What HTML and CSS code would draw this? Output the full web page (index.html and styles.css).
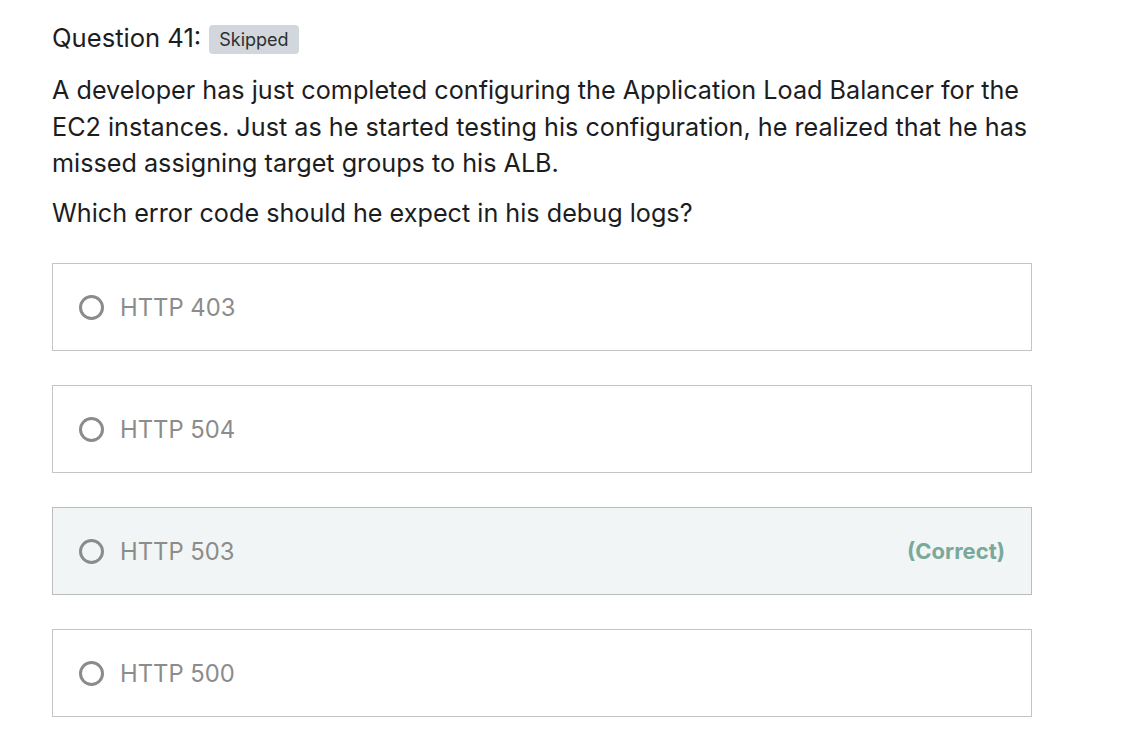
FILE: index.html
```html
<!DOCTYPE html>
<html>
<head>
<meta charset="utf-8">
<link rel="stylesheet" href="styles.css">
</head>
<body>
<div class="page">
  <div class="header">
    <span class="qtitle">Question 41:</span>
    <span class="badge">Skipped</span>
  </div>
  <p class="prompt">A developer has just completed configuring the Application Load Balancer for the EC2 instances. Just as he started testing his configuration, he realized that he has missed assigning target groups to his ALB.</p>
  <p class="prompt ask">Which error code should he expect in his debug logs?</p>
  <div class="answers">
    <div class="answer"><span class="radio"></span><span class="label">HTTP 403</span></div>
    <div class="answer"><span class="radio"></span><span class="label">HTTP 504</span></div>
    <div class="answer correct"><span class="radio"></span><span class="label">HTTP 503</span><span class="tag">(Correct)</span></div>
    <div class="answer"><span class="radio"></span><span class="label">HTTP 500</span></div>
  </div>
</div>
</body>
</html>
```
FILE: styles.css
```css
html, body {
  margin: 0;
  padding: 0;
  background: #ffffff;
}
body {
  font-family: Inter, "Noto Sans", sans-serif;
  color: #1c1d1f;
}
.page {
  padding: 20px 0 0 52px;
  width: 980px;
}
.header {
  display: flex;
  align-items: center;
  gap: 8px;
  height: 34px;
}
.qtitle {
  font-size: 25.6px;
}
.badge {
  background: #d1d7dc;
  color: #2d2f31;
  font-size: 18px;
  border-radius: 4px;
  padding: 0 10px;
  height: 29px;
  line-height: 29px;
  margin-top: 4px;
}
.prompt {
  font-size: 25.2px;
  line-height: 36.5px;
  margin: 18px 0 0;
}
.ask {
  margin-top: 13px;
}
.answers {
  display: flex;
  flex-direction: column;
  gap: 34px;
  margin-top: 32px;
}
.answer {
  height: 88px;
  box-sizing: border-box;
  border: 1px solid #c2c4c6;
  display: flex;
  align-items: center;
  padding: 0 26px 0 26px;
}
.answer.correct {
  background: #f1f5f5;
  border-color: #b9bdbf;
}
.radio {
  width: 25px;
  height: 25px;
  box-sizing: border-box;
  border: 3px solid #8b8b8b;
  border-radius: 50%;
  flex: none;
}
.label {
  margin-left: 16px;
  font-size: 23.8px;
  color: #8c8c8c;
}
.tag {
  margin-left: auto;
  font-size: 22px;
  font-weight: 700;
  color: #7aa89b;
}
```
